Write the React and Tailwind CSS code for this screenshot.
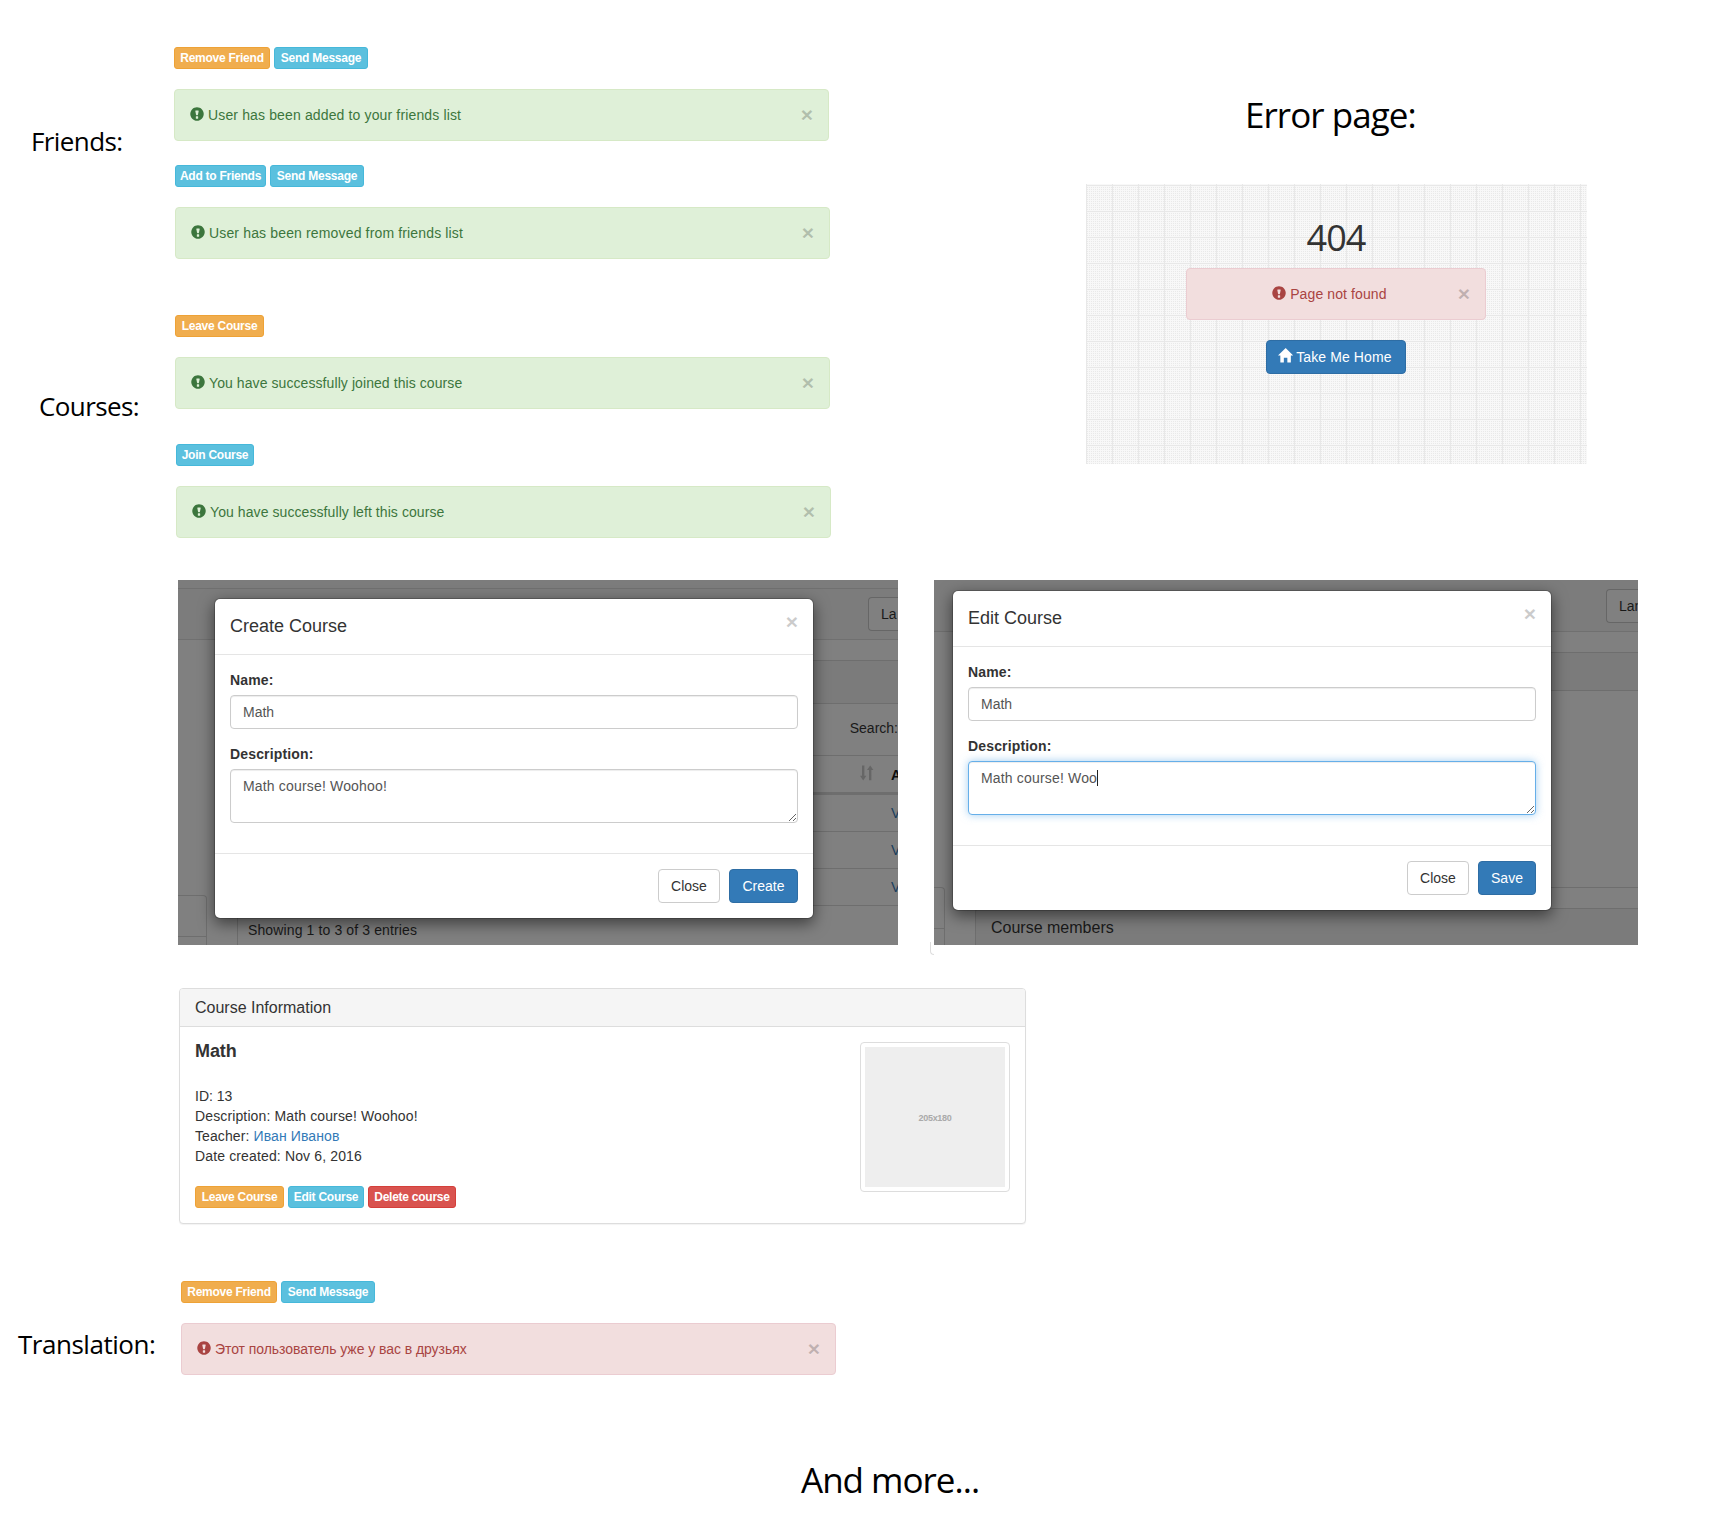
import React from "react";

const tones = {
  success: "border-[#d6e9c6] bg-[#dff0d8] text-[#3c763d]",
  danger: "border-[#ebccd1] bg-[#f2dede] text-[#a94442]",
};

const buttonTones = {
  warning: "border-[#eea236] bg-[#f0ad4e]",
  info: "border-[#46b8da] bg-[#5bc0de]",
  danger: "border-[#d43f3a] bg-[#d9534f]",
};

function ExclamationIcon() {
  return (
    <svg viewBox="0 0 1200 1200" className="mt-0.5 block size-3.5 shrink-0" fill="currentColor">
      <path
        transform="translate(0 1200) scale(1 -1)"
        d="M600 1177q117 0 224 -45.5t184.5 -123t123 -184.5t45.5 -224t-45.5 -224t-123 -184.5t-184.5 -123t-224 -45.5t-224 45.5t-184.5 123t-123 184.5t-45.5 224t45.5 224t123 184.5t184.5 123t224 45.5zM704 900h-208q-20 0 -32 -14.5t-8 -34.5l58 -302q4 -20 21.5 -34.5t37.5 -14.5h54q20 0 37.5 14.5t21.5 34.5l58 302q4 20 -8 34.5t-32 14.5zM675 400h-150q-10 0 -17.5 -7.5t-7.5 -17.5v-150q0 -10 7.5 -17.5t17.5 -7.5h150q10 0 17.5 7.5t7.5 17.5v150q0 10 -7.5 17.5t-17.5 7.5z"
      />
    </svg>
  );
}

function HomeIcon() {
  return (
    <svg viewBox="0 0 1300 1240" className="mt-[1px] -ml-px block h-[14.5px] w-[15.2px] shrink-0" fill="currentColor">
      <path
        transform="translate(0 1240) scale(1 -1)"
        d="M18 618l620 608q8 7 18.5 7t17.5 -7l608 -608q8 -8 5.5 -13t-12.5 -5h-175v-575q0 -10 -7.5 -17.5t-17.5 -7.5h-250q-10 0 -17.5 7.5t-7.5 17.5v375h-300v-375q0 -10 -7.5 -17.5t-17.5 -7.5h-250q-10 0 -17.5 7.5t-7.5 17.5v575h-175q-10 0 -12.5 5t5.5 13z"
      />
    </svg>
  );
}

function SortIcon() {
  return (
    <svg viewBox="0 0 14 16" className="block h-4 w-3.5 text-[#666]" fill="currentColor">
      <path d="M2 0.5h2.4v10.2h2L3.2 15.5 0 10.700h2zM9 15.200h2.400v-10.200h2L10.200 0.500 7 5h2z" />
    </svg>
  );
}

function CloseMark({ className = "" }) {
  return (
    <button className={`block h-[21px] text-[21px] leading-[21px] font-bold text-black opacity-20 [text-shadow:0_1px_0_#fff] ${className}`}>
      ×
    </button>
  );
}

function SmallButton({ tone, children, className = "" }) {
  return (
    <button className={`h-[22px] rounded-[3px] border text-xs leading-[18px] font-bold tracking-[-0.25px] whitespace-nowrap text-white ${buttonTones[tone]} ${className}`}>
      {children}
    </button>
  );
}

function Alert({ tone, centered = false, children, className = "" }) {
  return (
    <div className={`flex h-[52px] rounded-[4px] border py-[15px] pr-[15px] pl-[15px] text-sm leading-5 ${tones[tone]} ${className}`}>
      <div className={`flex flex-1 gap-1 ${centered ? "justify-center pr-px" : ""}`}>
        <ExclamationIcon />
        <span>{children}</span>
      </div>
      <CloseMark className="-mt-px" />
    </div>
  );
}

function Notice({ tone, buttons, children, className = "" }) {
  return (
    <section className={`w-[655px] ${className}`}>
      <div className="flex gap-1">{buttons}</div>
      <Alert tone={tone} className="mt-5">
        {children}
      </Alert>
    </section>
  );
}

function Modal({ title, description, action, actionWidth, focused = false, className = "" }) {
  return (
    <div className={`absolute w-[600px] rounded-[6px] border border-black/20 bg-white bg-clip-padding shadow-[0_5px_15px_rgba(0,0,0,0.5)] ${className}`}>
      <div className="flex h-14 justify-between border-b border-[#e5e5e5] p-[15px]">
        <h4 className="text-lg leading-[25.700px]">{title}</h4>
        <CloseMark className="-mt-[3px]" />
      </div>
      <div className="px-[15px] pt-[15px] pb-[30px]">
        <label className="block leading-5 font-bold tracking-[0.15px]">Name:</label>
        <input
          readOnly
          defaultValue="Math"
          className="mt-[5px] block h-[34px] w-full rounded-[4px] border border-[#ccc] bg-white px-3 py-1.5 text-sm text-[#555] shadow-[inset_0_1px_1px_rgba(0,0,0,0.075)] outline-none"
        />
        <label className="mt-[15px] block leading-5 font-bold tracking-[0.15px]">Description:</label>
        <div className="relative mt-[5px]">
          <textarea
            readOnly
            defaultValue={description}
            className={`block h-[54px] w-full resize rounded-[4px] border bg-white px-3 py-1.5 text-sm leading-5 tracking-[0.17px] text-[#555] outline-none ${
              focused
                ? "border-[#66afe9] shadow-[inset_0_1px_1px_rgba(0,0,0,0.075),0_0_8px_rgba(102,175,233,0.6)]"
                : "border-[#ccc] shadow-[inset_0_1px_1px_rgba(0,0,0,0.075)]"
            }`}
          />
          {focused && <span className="absolute top-[9px] left-[129px] h-4 w-px bg-[#222]" />}
        </div>
      </div>
      <div className="flex justify-end gap-[9px] border-t border-[#e5e5e5] p-[15px]">
        <button className="h-[34px] w-[62px] rounded-[4px] border border-[#ccc] bg-white text-sm">Close</button>
        <button className={`h-[34px] rounded-[4px] border border-[#2e6da4] bg-[#337ab7] text-sm text-white ${actionWidth}`}>
          {action}
        </button>
      </div>
    </div>
  );
}

function DimmedCoursesPage() {
  return (
    <div className="flex h-full flex-col">
      <div className="h-2 shrink-0 bg-[#7c7c7c]" />
      <div className="flex h-[52px] shrink-0 justify-end border-y border-[#707070] bg-[#7c7c7c]">
        <div className="mt-2 h-[34px] w-[30px] rounded-l-[4px] border border-r-0 border-[#666] bg-[#808080] pl-3 text-sm leading-8 whitespace-nowrap text-[#191919]">
          La
        </div>
      </div>
      <div className="flex flex-1">
        <div className="flex w-[59px] flex-col justify-end">
          <div className="h-[50px] w-[29px] rounded-tr-[4px] border-t border-r border-[#6e6e6e]">
            <div className="h-[41px] border-b border-[#6e6e6e]" />
          </div>
        </div>
        <div className="mt-5 flex-1 rounded-tl-[4px] border-t border-l border-[#6e6e6e]">
          <div className="h-[43px] border-b border-[#6e6e6e] bg-[#7b7b7b]" />
          <div className="flex h-[51px] justify-end pt-[14px] text-sm leading-5 text-[#191919]">Search:</div>
          <div className="flex h-[40px] justify-end gap-[17px] border-t border-b-[3px] border-[#6e6e6e] pt-[9px]">
            <SortIcon />
            <span className="w-[7px] text-sm leading-5 font-bold text-[#0c0c0c]">A</span>
          </div>
          {[0, 1, 2].map((row) => (
            <div key={row} className="flex h-[37px] justify-end border-b border-[#6e6e6e] pt-2">
              <span className="w-[7px] text-sm leading-5 text-[#1a3d5c]">V</span>
            </div>
          ))}
          <p className="mt-3.5 ml-[10px] text-sm leading-5 tracking-[0.12px] text-[#191919]">Showing 1 to 3 of 3 entries</p>
        </div>
      </div>
    </div>
  );
}

function DimmedCoursePage() {
  return (
    <div className="flex h-full flex-col">
      <div className="flex h-[52px] shrink-0 justify-end overflow-hidden border-b border-[#707070] bg-[#7c7c7c]">
        <div className="mt-[9px] h-[34px] w-8 rounded-l-[4px] border border-r-0 border-[#666] bg-[#808080] pl-3 text-sm leading-8 whitespace-nowrap text-[#191919]">
          Lan
        </div>
      </div>
      <div className="flex flex-1">
        <div className="flex w-[41px] flex-col justify-end">
          <div className="h-[58px] w-[11px] rounded-tr-[4px] border-t border-r border-[#6e6e6e]">
            <div className="h-[41px] border-b border-[#6e6e6e]" />
          </div>
        </div>
        <div className="flex flex-1 flex-col">
          <div className="mt-5 h-[236px] rounded-l-[4px] border-y border-l border-[#6e6e6e]">
            <div className="h-[38px] border-b border-[#6e6e6e] bg-[#7b7b7b]" />
          </div>
          <div className="mt-5 flex-1 rounded-tl-[4px] border-t border-l border-[#6e6e6e] bg-[#7b7b7b] pt-[9px] pl-[15px] text-base leading-5 text-[#191919]">
            Course members
          </div>
        </div>
      </div>
    </div>
  );
}

export default function App() {
  return (
    <main className="flex h-[1518px] w-[1736px] flex-col overflow-hidden bg-white font-['Liberation_Sans',Arial,sans-serif] text-sm text-[#333]">
      <div className="flex h-[580px] shrink-0">
        <div className="w-[174px] shrink-0 font-['Open_Sans',sans-serif] text-[26px] leading-9 tracking-[-0.6px] text-black">
          <h2 className="mt-[123px] ml-[31px] whitespace-nowrap">Friends:</h2>
          <h2 className="mt-[229px] ml-[39px] whitespace-nowrap">Courses:</h2>
        </div>
        <div className="w-[912px] shrink-0 pt-[47px]">
          <Notice
            tone="success"
            buttons={
              <>
                <SmallButton tone="warning" className="w-24">Remove Friend</SmallButton>
                <SmallButton tone="info" className="w-[94px]">Send Message</SmallButton>
              </>
            }
          >
            <span className="tracking-[0.14px]">User has been added to your friends list</span>
          </Notice>
          <Notice
            tone="success"
            className="mt-6 ml-px"
            buttons={
              <>
                <SmallButton tone="info" className="w-[91px]">Add to Friends</SmallButton>
                <SmallButton tone="info" className="w-[94px]">Send Message</SmallButton>
              </>
            }
          >
            <span className="tracking-[0.15px]">User has been removed from friends list</span>
          </Notice>
          <Notice
            tone="success"
            className="mt-14 ml-px"
            buttons={<SmallButton tone="warning" className="w-[89px]">Leave Course</SmallButton>}
          >
            <span className="tracking-[0.08px]">You have successfully joined this course</span>
          </Notice>
          <Notice
            tone="success"
            className="mt-[35px] ml-0.5"
            buttons={<SmallButton tone="info" className="w-[78px]">Join Course</SmallButton>}
          >
            <span className="tracking-[0.08px]">You have successfully left this course</span>
          </Notice>
        </div>
        <div className="w-[501px] shrink-0">
          <h2 className="mt-[91px] ml-[159px] font-['Open_Sans',sans-serif] text-[35px] leading-[48px] tracking-[-0.95px] whitespace-nowrap text-black">
            Error page:
          </h2>
          <div className="mt-[45px] flex h-[280px] flex-col items-center bg-[#f8f8f8] bg-[linear-gradient(90deg,#e8e8e8_1px,transparent_1px),linear-gradient(#e8e8e8_1px,transparent_1px),linear-gradient(90deg,#f8f8f8_1px,transparent_1px),linear-gradient(#f8f8f8_1px,#e9e9e9_1px)] bg-[size:26px_26px,26px_26px,2px_2px,2px_2px] bg-[position:0_1px,0_1px,0_0,0_0] pr-px">
            <h1 className="mt-[29px] font-['Open_Sans',sans-serif] text-4xl leading-[50px] tracking-[-1px]">404</h1>
            <Alert tone="danger" centered className="mt-[5px] w-[300px]">
              <span className="tracking-[0.1px]">Page not found</span>
            </Alert>
            <button className="mt-5 flex h-[34px] w-[140px] gap-[3px] rounded-[4px] border border-[#2e6da4] bg-[#337ab7] px-3 py-1.5 text-sm leading-5 tracking-[0.1px] whitespace-nowrap text-white">
              <HomeIcon />
              Take Me Home
            </button>
          </div>
        </div>
      </div>

      <div className="flex h-[408px] shrink-0 pl-[178px]">
        <div className="relative h-[365px] w-[720px] overflow-hidden bg-[#808080]">
          <DimmedCoursesPage />
          <Modal
            title="Create Course"
            description="Math course! Woohoo!"
            action="Create"
            actionWidth="w-[69px]"
            className="top-[18px] left-9"
          />
        </div>
        <div className="mt-[362px] ml-8 h-[13px] w-1 rounded-bl-[4px] border-b border-l border-[#ddd]" />
        <div className="relative h-[365px] w-[704px] overflow-hidden bg-[#808080]">
          <DimmedCoursePage />
          <Modal
            title="Edit Course"
            description="Math course! Woo"
            action="Save"
            actionWidth="w-[58px]"
            focused
            className="top-[10px] left-[18px]"
          />
        </div>
      </div>

      <section className="ml-[179px] h-[236px] w-[847px] shrink-0 overflow-hidden rounded-[4px] border border-[#ddd] bg-white shadow-[0_1px_1px_rgba(0,0,0,0.05)]">
        <h3 className="h-[38px] border-b border-[#ddd] bg-[#f5f5f5] px-[15px] py-2.5 text-base leading-[18px]">
          Course Information
        </h3>
        <div className="flex justify-between p-[15px]">
          <div className="leading-5">
            <h4 className="text-lg leading-[18px] font-bold tracking-[-0.1px]">Math</h4>
            <p className="mt-[26px]">ID: 13</p>
            <p className="tracking-[0.13px]">Description: Math course! Woohoo!</p>
            <p className="tracking-[0.1px]">
              Teacher: <a className="text-[#337ab7]">Иван Иванов</a>
            </p>
            <p className="tracking-[0.14px]">Date created: Nov 6, 2016</p>
            <div className="mt-5 flex gap-1">
              <SmallButton tone="warning" className="w-[89px]">Leave Course</SmallButton>
              <SmallButton tone="info" className="w-[76px]">Edit Course</SmallButton>
              <SmallButton tone="danger" className="w-[88px]">Delete course</SmallButton>
            </div>
          </div>
          <div className="size-[150px] rounded-[4px] border border-[#ddd] p-1">
            <div className="flex size-full items-center justify-center bg-[#eee] pt-0.5 text-[9px] font-bold tracking-[-0.3px] text-[#aaa]">
              205x180
            </div>
          </div>
        </div>
      </section>

      <div className="mt-[57px] flex h-[94px] shrink-0">
        <h2 className="mt-[45px] w-[181px] shrink-0 pl-[18px] font-['Open_Sans',sans-serif] text-[26px] leading-9 tracking-[-0.48px] whitespace-nowrap text-black">
          Translation:
        </h2>
        <Notice
          tone="danger"
          buttons={
            <>
              <SmallButton tone="warning" className="w-24">Remove Friend</SmallButton>
              <SmallButton tone="info" className="w-[94px]">Send Message</SmallButton>
            </>
          }
        >
          <span className="tracking-[-0.06px]">Этот пользователь уже у вас в друзьях</span>
        </Notice>
      </div>

      <h2 className="mt-[81px] ml-[801px] font-['Open_Sans',sans-serif] text-[35px] leading-[48px] tracking-[-1px] whitespace-nowrap text-black">
        And more...
      </h2>
    </main>
  );
}
